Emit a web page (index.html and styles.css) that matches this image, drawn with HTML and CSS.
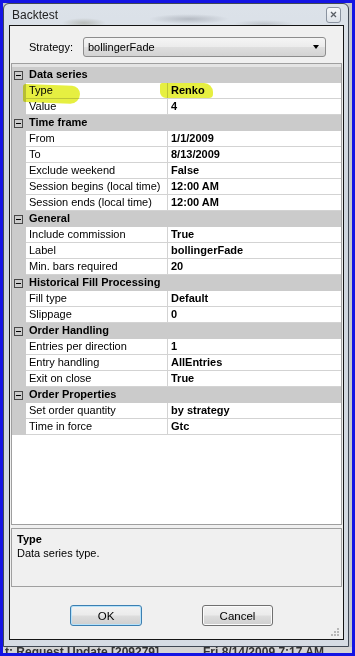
FILE: index.html
```html
<!DOCTYPE html>
<html lang="en">
<head>
    <meta charset="UTF-8">
    <meta name="viewport" content="width=device-width, initial-scale=1.0">
    <title>Backtest</title>
    <link rel="stylesheet" href="styles.css">
</head>
<body>
<div class="screen">
    <div class="window">
        <div class="titlebar">
            <span class="title">Backtest</span>
            <span class="close">
                <svg width="7" height="7" viewBox="0 0 7 7"><path d="M1 1 L6 6 M6 1 L1 6" stroke="#5a5f66" stroke-width="1.3" fill="none"/></svg>
            </span>
        </div>

        <div class="client">
            <!-- Strategy picker -->
            <div class="strategy">
                <label>Strategy:</label>
                <div class="combo"><span>bollingerFade</span><span class="arrow"></span></div>
            </div>

            <!-- Property grid -->
            <div class="grid">
                <div class="row cat"><span class="gutter"><i class="minus"></i></span><span class="name">Data series</span></div>
                <div class="row"><span class="gutter"></span><span class="name">Type</span><span class="value">Renko</span></div>
                <div class="row"><span class="gutter"></span><span class="name">Value</span><span class="value">4</span></div>

                <div class="row cat"><span class="gutter"><i class="minus"></i></span><span class="name">Time frame</span></div>
                <div class="row"><span class="gutter"></span><span class="name">From</span><span class="value">1/1/2009</span></div>
                <div class="row"><span class="gutter"></span><span class="name">To</span><span class="value">8/13/2009</span></div>
                <div class="row"><span class="gutter"></span><span class="name">Exclude weekend</span><span class="value">False</span></div>
                <div class="row"><span class="gutter"></span><span class="name">Session begins (local time)</span><span class="value">12:00 AM</span></div>
                <div class="row"><span class="gutter"></span><span class="name">Session ends (local time)</span><span class="value">12:00 AM</span></div>

                <div class="row cat"><span class="gutter"><i class="minus"></i></span><span class="name">General</span></div>
                <div class="row"><span class="gutter"></span><span class="name">Include commission</span><span class="value">True</span></div>
                <div class="row"><span class="gutter"></span><span class="name">Label</span><span class="value">bollingerFade</span></div>
                <div class="row"><span class="gutter"></span><span class="name">Min. bars required</span><span class="value">20</span></div>

                <div class="row cat"><span class="gutter"><i class="minus"></i></span><span class="name">Historical Fill Processing</span></div>
                <div class="row"><span class="gutter"></span><span class="name">Fill type</span><span class="value">Default</span></div>
                <div class="row"><span class="gutter"></span><span class="name">Slippage</span><span class="value">0</span></div>

                <div class="row cat"><span class="gutter"><i class="minus"></i></span><span class="name">Order Handling</span></div>
                <div class="row"><span class="gutter"></span><span class="name">Entries per direction</span><span class="value">1</span></div>
                <div class="row"><span class="gutter"></span><span class="name">Entry handling</span><span class="value">AllEntries</span></div>
                <div class="row"><span class="gutter"></span><span class="name">Exit on close</span><span class="value">True</span></div>

                <div class="row cat"><span class="gutter"><i class="minus"></i></span><span class="name">Order Properties</span></div>
                <div class="row"><span class="gutter"></span><span class="name">Set order quantity</span><span class="value">by strategy</span></div>
                <div class="row"><span class="gutter"></span><span class="name">Time in force</span><span class="value">Gtc</span></div>

                <!-- marker highlights drawn over the grid -->
                <span class="marker marker-type"></span>
                <span class="marker marker-renko"></span>
            </div>

            <!-- Description box -->
            <div class="desc">
                <b>Type</b>
                <p>Data series type.</p>
            </div>

            <div class="buttons">
                <button class="btn default">OK</button>
                <button class="btn">Cancel</button>
            </div>

            <svg class="grip" width="11" height="10" viewBox="0 0 11 10">
                <rect x="8" y="0" width="2" height="2" fill="#b8b8b8"/>
                <rect x="5" y="3" width="2" height="2" fill="#b8b8b8"/>
                <rect x="8" y="3" width="2" height="2" fill="#b8b8b8"/>
                <rect x="2" y="6" width="2" height="2" fill="#b8b8b8"/>
                <rect x="5" y="6" width="2" height="2" fill="#b8b8b8"/>
                <rect x="8" y="6" width="2" height="2" fill="#b8b8b8"/>
            </svg>
        </div>
    </div>

    <!-- app behind the dialog -->
    <div class="behind">
        <span class="b1">t: Request Update [209279]</span>
        <span class="b2">Fri 8/14/2009 7:17 AM</span>
    </div>
</div>
</body>
</html>
```
FILE: styles.css
```css
* { box-sizing: border-box; }
body { margin: 0; padding: 3px; width: 355px; height: 656px; overflow: hidden; background: #1414e4; font-family: "Liberation Sans", Arial, sans-serif; font-size: 11px; color: #000; }

.screen { width: 349px; height: 650px; overflow: hidden; background: #c3c7cd; }

/* dialog frame */
.window { width: 346px; height: 644px; padding: 0 4px 6px 5px; border: 1px solid #404854; border-radius: 6px 6px 0 0;
    background:
        radial-gradient(ellipse 22px 5px at 80px 19px, rgba(120,120,100,.35), transparent),
        radial-gradient(ellipse 40px 5px at 185px 15px, rgba(110,115,125,.35), transparent),
        radial-gradient(ellipse 30px 4px at 260px 20px, rgba(130,135,140,.3), transparent),
        linear-gradient(#dce2e9, #ced5de 30%, #d6dce4); }
.titlebar { height: 21px; display: flex; align-items: center; justify-content: space-between; padding: 0 3px 0 3px; }
.title { font-size: 12px; color: #222; }
.close { width: 15px; height: 16px; display: flex; align-items: center; justify-content: center; border: 1px solid #8a93a0; border-radius: 3px; background: linear-gradient(#f6f8fa, #dde2e8); }

.client { position: relative; height: 615px; border: 1px solid #141414; background: #f0f0f0; }

.strategy { display: flex; align-items: center; height: 20px; margin-top: 11px; padding-left: 19px; }
.strategy label { width: 54px; }
.combo { width: 243px; height: 20px; display: flex; align-items: center; justify-content: space-between; padding: 0 6px 0 4px; border: 1px solid #8d8d8d; border-radius: 3px; background: linear-gradient(#f5f5f5, #ececec 48%, #dedede 52%, #d3d3d3); }
.arrow { width: 0; height: 0; border-left: 3.5px solid transparent; border-right: 3.5px solid transparent; border-top: 4px solid #000; }

/* property grid */
.grid { position: relative; height: 462px; margin: 6px 1px 0; padding-top: 3px; border: 1px solid #9f9f9f; background: #fff; box-shadow: inset 0 3px 0 #e4e4e4; }
.row { display: flex; height: 16px; line-height: 15px; }
.gutter { flex: none; width: 14px; background: #cbcbcb; }
.name { flex: none; width: 142px; padding-left: 3px; white-space: nowrap; overflow: hidden; border-right: 1px solid #d3d3d3; border-bottom: 1px solid #d3d3d3; }
.value { flex: 1; padding-left: 3px; font-weight: bold; border-bottom: 1px solid #d3d3d3; }
.cat { background: #cbcbcb; font-weight: bold; }
.cat .name { flex: 1; border: 0; }
.minus { position: relative; display: block; width: 9px; height: 9px; margin: 4px 0 0 2px; border: 1px solid #474747; }
.minus::after { content: ""; position: absolute; left: 1px; top: 3px; width: 5px; height: 1px; background: #000; }

.marker { position: absolute; background: #e4ee2c; mix-blend-mode: multiply; opacity: .9; }
.marker-type { left: 11px; top: 21px; width: 57px; height: 18px; border-radius: 3px 8px 10px 2px; transform: skewY(2deg); }
.marker-renko { left: 148px; top: 19px; width: 53px; height: 15px; border-radius: 2px 9px 4px 6px; }

.desc { height: 59px; margin: 3px 1px 0; padding: 3px 5px; line-height: 14px; border: 1px solid #a0a0a0; background: #f0f0f0; }
.desc p { margin: 0; }

.buttons { display: flex; gap: 60px; margin-top: 18px; padding-left: 60px; }
.btn { width: 72px; height: 21px; padding: 0; font-family: "Liberation Sans", Arial, sans-serif; font-size: 11.5px; color: #000; border: 1px solid #707070; border-radius: 3px; background: linear-gradient(#f2f2f2, #ebebeb 48%, #dddddd 52%, #cfcfcf); box-shadow: inset 0 0 0 1px #fbfbfb; }
.btn + .btn { width: 71px; }
.btn.default { border-color: #3c7fb1; box-shadow: inset 0 0 0 1px #b6e2fa; }

.grip { position: absolute; right: 3px; bottom: 1px; }

.behind { position: relative; height: 6px; overflow: hidden; background: #d4d4d4; font-size: 12px; font-weight: bold; color: #333; line-height: 12px; }
.behind span { position: absolute; top: -1px; }
.b1 { left: 2px; }
.b2 { left: 200px; }
```
